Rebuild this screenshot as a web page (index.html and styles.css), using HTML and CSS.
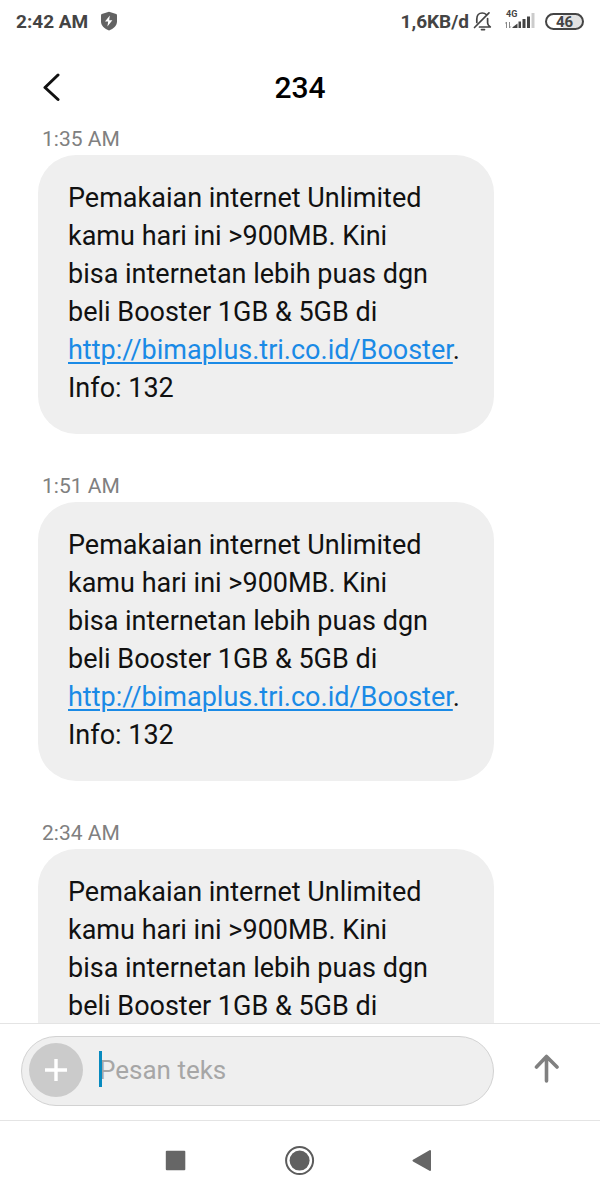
FILE: index.html
```html
<!DOCTYPE html>
<html lang="id">
<head>
<meta charset="utf-8">
<meta name="viewport" content="width=device-width, initial-scale=1">
<title>234</title>
<link rel="stylesheet" href="styles.css">
</head>
<body>
<div class="phone">
  <div class="status">
    <span>2:42 AM</span>
    <svg class="shield" width="18" height="20" viewBox="0 0 18 20"><path fill="#626262" d="M9 .8 16.2 3q.8.3.8 1.200v6.300c0 4.400-3.600 7.400-8 9-4.400-1.600-8-4.600-8-9V4.200q0-.9.8-1.200z"/><path fill="#fff" d="M9.800 4.600 5 10.600h3.200l-.8 4.900 5-6.300H9.200z"/></svg>
    <span class="rate">1,6KB/d</span>
    <svg class="bell" width="20" height="20" viewBox="0 0 20 20" fill="none" stroke="#444" stroke-width="1.700" stroke-linecap="round" stroke-linejoin="round"><path d="M3.800 11.500V8c0-3.700 2.200-6 5.400-6 1.700 0 3 .5 4 1.500M14.600 7.500V12c0 1.500.8 2.700 2.700 4H6.500M16 1.800 1.500 16.500M8.500 18.600h3"/></svg>
    <svg class="signal" width="32" height="22" viewBox="0 0 32 22"><text class="net" x="1" y="7">4G</text><path fill="none" stroke="#888" stroke-width="1" d="M1.500 18v-6l-1.200 1.500M4.500 12v6l1.200-1.500"/><g fill="#444"><path d="M7.500 18v-.8l5-3.700V18z"/><path d="M13.500 11.500H16V18h-2.500zM17.500 9h3v9h-3zM22 6.500h3V18h-3z"/></g><path fill="#ccc" d="M26.500 3h3v15h-3z"/></svg>
    <span class="battery">46</span>
  </div>
  <header class="header">
    <button class="back" aria-label="Kembali"><svg width="20" height="30" viewBox="0 0 20 30" fill="none" stroke="#111" stroke-width="3" stroke-linecap="round" stroke-linejoin="round"><path d="M16 2 3 14.500 16 26.500"/></svg></button>
    <h1 class="title">234</h1>
  </header>
  <main class="messages">
    <article class="message">
      <time class="time">1:35 AM</time>
      <p class="bubble">Pemakaian internet Unlimited<br>kamu hari ini &gt;900MB. Kini<br>bisa internetan lebih puas dgn<br>beli Booster 1GB &amp; 5GB di<br><a class="link" href="http://bimaplus.tri.co.id/Booster">http://bimaplus.tri.co.id/Booster</a>.<br>Info: 132</p>
    </article>
    <article class="message">
      <time class="time">1:51 AM</time>
      <p class="bubble">Pemakaian internet Unlimited<br>kamu hari ini &gt;900MB. Kini<br>bisa internetan lebih puas dgn<br>beli Booster 1GB &amp; 5GB di<br><a class="link" href="http://bimaplus.tri.co.id/Booster">http://bimaplus.tri.co.id/Booster</a>.<br>Info: 132</p>
    </article>
    <article class="message">
      <time class="time">2:34 AM</time>
      <p class="bubble bubble-open">Pemakaian internet Unlimited<br>kamu hari ini &gt;900MB. Kini<br>bisa internetan lebih puas dgn<br>beli Booster 1GB &amp; 5GB di</p>
    </article>
  </main>
  <form class="composer">
    <div class="field">
      <button class="add" type="button" aria-label="Tambah"><svg width="24" height="24" viewBox="0 0 24 24" stroke="#fff" stroke-width="3.400"><path d="M12 1v22M1 12h22"/></svg></button>
      <div class="entry">
        <input class="input" type="text" placeholder="Pesan teks" aria-label="Pesan teks">
        <span class="caret"></span>
      </div>
    </div>
    <button class="send" type="button" aria-label="Kirim"><svg width="26" height="34" viewBox="0 0 26 34" fill="none" stroke="#808080" stroke-width="3.600" stroke-linecap="round" stroke-linejoin="round"><path d="M12.500 27V3M2.500 13 12.500 2.500 23 13"/></svg></button>
  </form>
  <nav class="nav">
    <button class="key" aria-label="Aplikasi terbaru"><svg width="30" height="30" viewBox="0 0 30 30"><rect x="4.800" y="4.800" width="19.500" height="19.500" rx="1" fill="#666"/></svg></button>
    <button class="key" aria-label="Beranda"><svg width="30" height="30" viewBox="0 0 30 30"><circle cx="14.600" cy="14.600" r="13.500" fill="none" stroke="#5c5c5c" stroke-width="2"/><circle cx="14.600" cy="14.600" r="10" fill="#606060"/></svg></button>
    <button class="key" aria-label="Kembali"><svg width="30" height="30" viewBox="0 0 30 30"><path fill="#666" stroke="#666" stroke-width="2" stroke-linejoin="round" d="M21 5v19L4.500 14.600z"/></svg></button>
  </nav>
</div>
</body>
</html>
```
FILE: styles.css
```css
* { box-sizing: border-box; }
body { margin: 0; background: #fff; color: #111; font-family: Roboto, "Liberation Sans", sans-serif; }
button { display: flex; align-items: center; justify-content: center; padding: 0; border: 0; background: none; }
svg { display: block; flex: none; }
.phone { display: flex; flex-direction: column; height: 100vh; overflow: hidden; }
.status { display: flex; align-items: center; flex: none; height: 42px; padding: 0 16px; color: #444; font-size: 19px; font-weight: 700; }
.shield { margin-left: 12px; }
.rate { margin-left: auto; }
.bell { margin-left: 4px; }
.signal { margin: 0 8px 0 12px; }
.net { fill: #444; font-size: 9px; font-weight: 700; }
.battery { width: 39px; height: 17px; border: 2px solid #444; border-radius: 9px; background: linear-gradient(90deg, #fff 46%, #e2e2e2 46%); font-size: 15px; line-height: 14px; text-align: center; }
.header { display: grid; grid-template-columns: 40px 1fr 40px; align-items: center; flex: none; height: 85px; padding: 6px 32px 0; }
.back { height: 40px; }
.title { margin: 0; color: #000; font-size: 30px; line-height: 36px; font-weight: 500; text-align: center; }
.messages { flex: 1; min-height: 0; overflow: hidden; padding: 0 38px; }
.message { display: flex; flex-direction: column; align-items: flex-start; gap: 4px; margin-bottom: 40px; }
.time { padding-left: 4px; color: #808080; font-size: 21px; line-height: 24px; }
.bubble { width: 87%; margin: 0; padding: 24px 30px 27px; border-radius: 38px; background: #efefef; font-size: 27px; line-height: 38px; }
.bubble-open { border-radius: 38px 38px 0 0; }
.link { color: #1a8ae6; text-decoration: underline; text-decoration-thickness: 2px; text-underline-offset: 3px; }
.composer { display: flex; align-items: center; flex: none; height: 98px; padding: 0 32px 2px 21px; border: solid #e4e4e4; border-width: 1px 0; background: #fff; }
.field { display: flex; align-items: center; flex: 1; gap: 16px; height: 70px; padding: 0 24px 2px 7px; border: 1px solid #d2d2d2; border-radius: 36px; background: #efefef; }
.add { flex: none; width: 54px; height: 54px; border-radius: 50%; background: #cbcbcb; }
.entry { position: relative; flex: 1; }
.input { display: block; width: 100%; height: 40px; padding: 0; border: 0; outline: 0; background: none; color: #111; font: 26px/40px Roboto, "Liberation Sans", sans-serif; }
.input::placeholder { color: #a6a6a6; opacity: 1; }
.caret { position: absolute; left: 0; top: 1px; width: 3px; height: 36px; background: #078abf; }
.send { width: 42px; height: 50px; margin-left: 32px; }
.nav { display: flex; align-items: center; justify-content: center; gap: 94px; flex: none; height: 79px; }
.key { width: 30px; height: 30px; }
```
